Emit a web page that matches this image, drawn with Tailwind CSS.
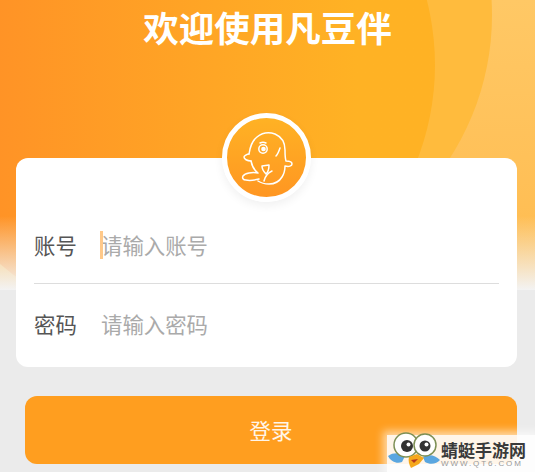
<!DOCTYPE html>
<html lang="zh">
  <head>
    <meta charset="UTF-8" />
    <meta name="viewport" content="width=device-width, initial-scale=1.0" />
    <title>欢迎使用凡豆伴</title>
    <script src="https://cdn.jsdelivr.net/npm/@tailwindcss/browser@4"></script>
  </head>

  <body class="bg-[#ebebeb] font-['Noto_Sans_CJK_SC','Noto_Sans',sans-serif]">
    <div class="relative w-[535px] h-[472px] overflow-hidden">
      <!-- header background with the two big circles -->
      <div class="absolute inset-x-0 top-0 h-[290px] overflow-hidden bg-gradient-to-b from-[#ffc865] to-[#ffbb4e]">
        <div class="absolute left-[-36px] top-[-249px] w-[528px] h-[528px] rounded-full bg-[#ffbb3d]"></div>
        <div class="absolute left-[-91px] top-[-198px] w-[526px] h-[526px] rounded-full bg-gradient-to-r from-[#ff9326] from-[17%] to-[#ffb224] to-[85%]"></div>
        <div class="absolute inset-x-0 bottom-0 h-[74px] bg-gradient-to-b from-[#f3f3f3]/0 to-[#f3f3f3]"></div>
      </div>

      <div class="relative flex flex-col">
        <h1 class="h-[53px] text-center text-white font-bold text-[35.5px] leading-[53px]">欢迎使用凡豆伴</h1>

        <!-- login card -->
        <div class="relative mt-[105px] mx-4 w-[501px] h-[209px] bg-white rounded-xl pt-[49px] px-[18px]">
          <div class="absolute left-[206px] top-[-45px] w-[89px] h-[89px] rounded-full border-[5px] border-white bg-gradient-to-b from-[#ffb224] to-[#ff9622] shadow-[0_4px_10px_rgba(0,0,0,0.06)] flex items-center justify-center">
            <svg width="62" height="62" viewBox="0 0 62 62" fill="none" stroke="#fff" stroke-width="1.5" stroke-linecap="round" stroke-linejoin="round">
              <path d="M13 27c1-7 3-13 8-17 5-4 12-5 18-3 7 3 10 9 10 16 0 4 0 8 1 11 3 0 6 1 6 3 0 2-3 3-7 2 0 4-1 8-3 11-3 5-8 7-13 7-4 0-8-1-11-3" />
              <path d="M13 27c-2 0-5 2-5 3 0 2 3 4 7 4" />
              <path d="M15 34c1 5 3 9 7 12 -6-1-13 0-15 3-1 2 0 4 3 4 4 1 9 0 13-1" />
              <path d="M28 54c1-4 3-8 8-10" />
              <path d="M26 39l7-1c0 4-1 7-3 9-2-2-4-4-4-8z" />
              <circle cx="27" cy="22" r="4.2" />
              <circle cx="27.5" cy="22" r="1.6" fill="#fff" />
              <path d="M24 16c2-1 4-1 6 0" />
              <path d="M44 21c-1 3-2 6-4 8" />
            </svg>
          </div>

          <div class="flex items-center h-[77px] border-b border-[#dddddd]">
            <label class="w-[67px] text-[21.4px] text-[#555555]">账号</label>
            <span class="relative text-[21.4px] text-[#aaaaaa]">
              <span class="absolute left-[-1px] top-[2px] w-[3px] h-[28px] bg-[#ffc98a]"></span>
              请输入账号
            </span>
          </div>
          <div class="flex items-center h-[80px]">
            <label class="w-[67px] text-[21.4px] text-[#555555]">密码</label>
            <span class="text-[21.4px] text-[#aaaaaa]">请输入密码</span>
          </div>
        </div>

        <button type="button" class="mt-[29px] ml-[25px] w-[492px] h-[68px] rounded-xl bg-[#ff9e1f] text-[21.4px] text-white/90">登录</button>
      </div>

      <!-- site watermark over the corner -->
      <div class="absolute right-0 bottom-0 w-[148px] h-[37px] bg-white/90 shadow-[0_0_8px_4px_rgba(255,255,255,0.6)]"></div>
      <div class="absolute left-[385px] top-[430px] w-[150px] h-[42px] flex items-start">
        <svg class="shrink-0" width="56" height="42" viewBox="0 0 56 42">
          <path d="M3 26c6-4 12-3 17 0l-3 6c-5 2-11 0-14-6z" fill="#5aa6e0" />
          <path d="M38 27c6-3 12-2 17 3-3 4-10 5-15 2z" fill="#5aa6e0" />
          <circle cx="21" cy="15" r="12" fill="#fff" stroke="#7d8f55" stroke-width="1.5" />
          <circle cx="40" cy="15" r="11" fill="#fff" stroke="#7d8f55" stroke-width="1.5" />
          <circle cx="22" cy="16" r="6" fill="#333" />
          <circle cx="40" cy="16" r="5.5" fill="#333" />
          <circle cx="23.5" cy="14.5" r="2" fill="#fff" />
          <circle cx="41.5" cy="14.5" r="2" fill="#fff" />
          <path d="M24 27l8-3 7 4-5 6-4 2-4 2c-2-4-3-7-2-11z" fill="#f5a81c" />
          <path d="M26 30l7-1-4 4z" fill="#b5381f" />
        </svg>
        <div class="mt-[10px] flex flex-col items-start">
          <span class="text-[17px] font-bold text-[#3a3a3a] leading-[19px] whitespace-nowrap">蜻蜓手游网</span>
          <span class="font-['Liberation_Sans',sans-serif] text-[8px] text-[#999999] tracking-[1.9px] leading-[9px] whitespace-nowrap">WWW.QT6.COM</span>
        </div>
      </div>
    </div>
  </body>
</html>
